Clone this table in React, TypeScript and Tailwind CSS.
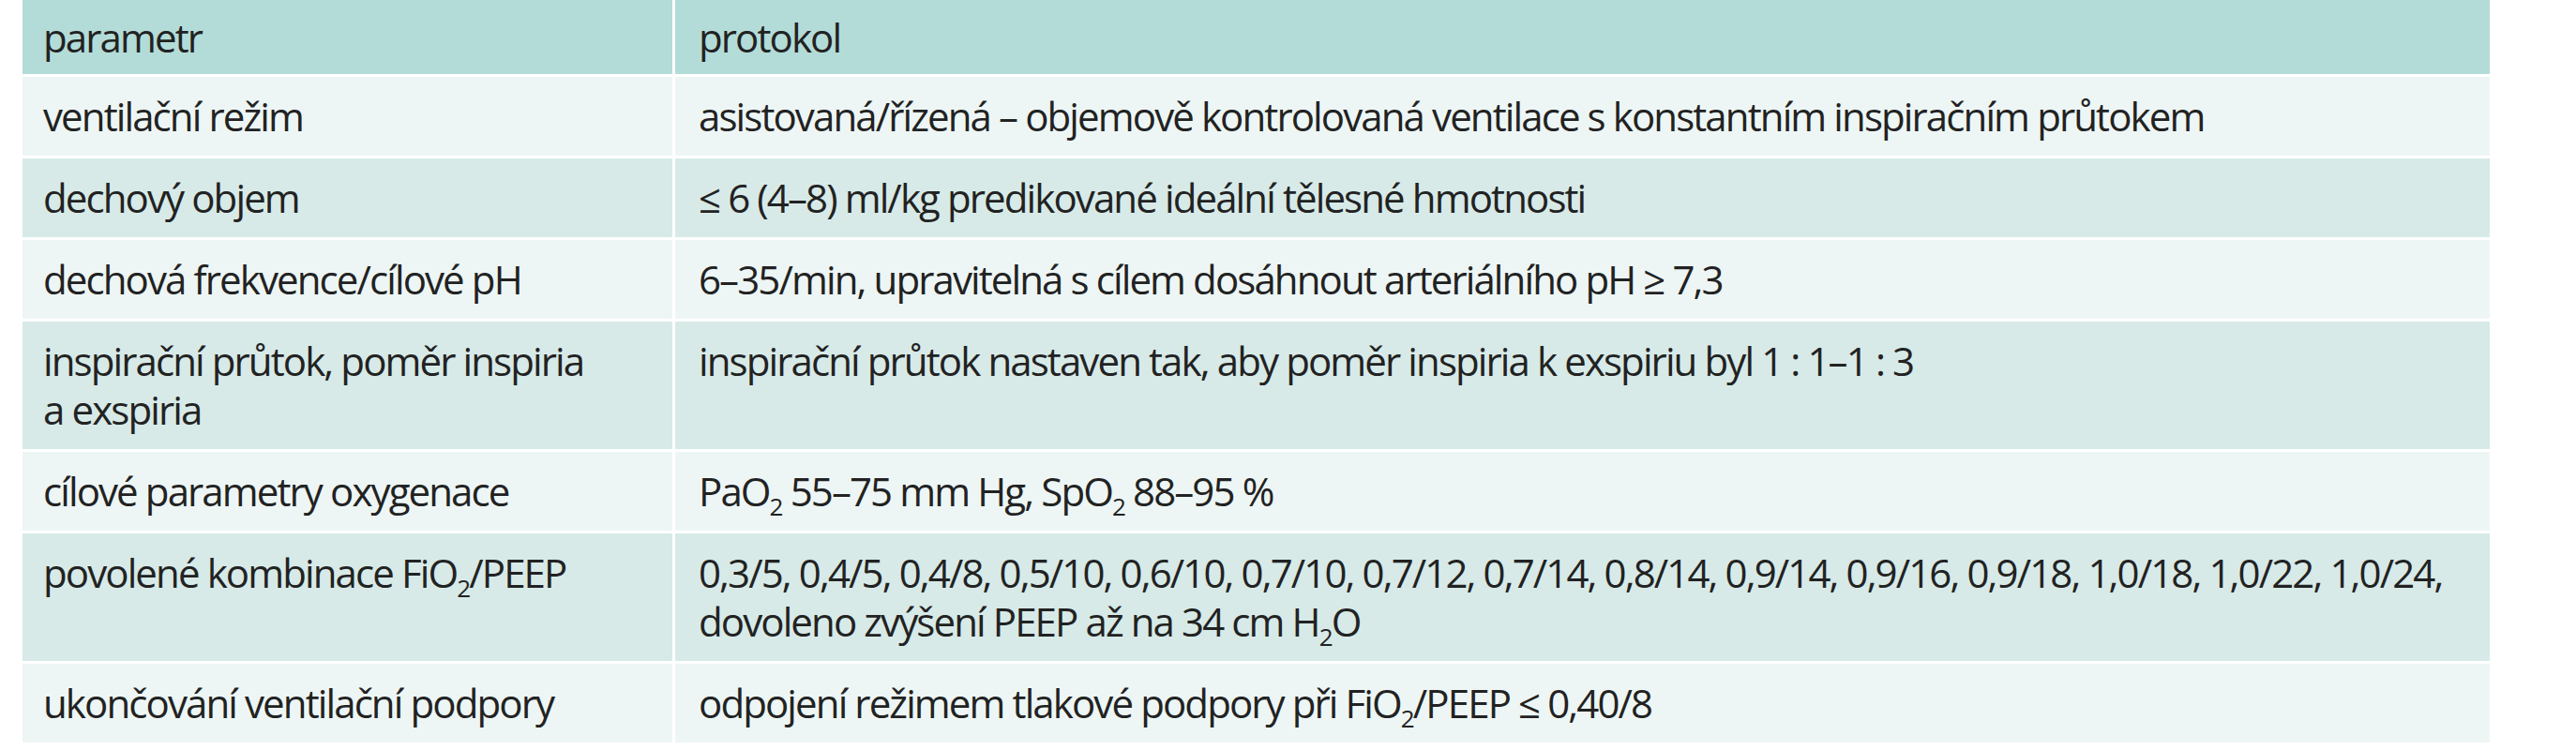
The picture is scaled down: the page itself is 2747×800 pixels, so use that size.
const Sub = ({ children }: { children: React.ReactNode }) => (
  <sub className="bottom-[-0.4em] text-[62%]">{children}</sub>
)

const rows: { param: React.ReactNode; protocol: React.ReactNode; tone: 'light' | 'dark' }[] = [
  {
    param: 'ventilační režim',
    protocol: 'asistovaná/řízená – objemově kontrolovaná ventilace s konstantním inspiračním průtokem',
    tone: 'light',
  },
  {
    param: 'dechový objem',
    protocol: '≤ 6 (4–8) ml/kg predikované ideální tělesné hmotnosti',
    tone: 'dark',
  },
  {
    param: 'dechová frekvence/cílové pH',
    protocol: '6–35/min, upravitelná s cílem dosáhnout arteriálního pH ≥ 7,3',
    tone: 'light',
  },
  {
    param: (
      <>
        inspirační průtok, poměr inspiria
        <br />a exspiria
      </>
    ),
    protocol: 'inspirační průtok nastaven tak, aby poměr inspiria k exspiriu byl 1 : 1–1 : 3',
    tone: 'dark',
  },
  {
    param: 'cílové parametry oxygenace',
    protocol: (
      <>
        PaO<Sub>2</Sub> 55–75 mm Hg, SpO<Sub>2</Sub> 88–95 %
      </>
    ),
    tone: 'light',
  },
  {
    param: (
      <>
        povolené kombinace FiO<Sub>2</Sub>/PEEP
      </>
    ),
    protocol: (
      <>
        0,3/5, 0,4/5, 0,4/8, 0,5/10, 0,6/10, 0,7/10, 0,7/12, 0,7/14, 0,8/14, 0,9/14, 0,9/16, 0,9/18, 1,0/18, 1,0/22, 1,0/24,
        <br />
        dovoleno zvýšení PEEP až na 34 cm H<Sub>2</Sub>O
      </>
    ),
    tone: 'dark',
  },
  {
    param: 'ukončování ventilační podpory',
    protocol: (
      <>
        odpojení režimem tlakové podpory při FiO<Sub>2</Sub>/PEEP ≤ 0,40/8
      </>
    ),
    tone: 'light',
  },
]

export default function App() {
  return (
    <div className="min-h-screen bg-white pl-[24px] font-['Open_Sans',sans-serif] text-[42px] leading-[52px] tracking-[-0.045em] text-[#222]">
      <div className="grid w-[2631px] grid-cols-[693px_1fr] gap-[3px] bg-white">
        <div className="bg-[#b3dcd8] pl-[22px] pt-[14px] pb-[13px]">parametr</div>
        <div className="bg-[#b3dcd8] pl-[25px] pt-[14px] pb-[13px]">protokol</div>
        {rows.map((r, i) => {
          const bg = r.tone === 'light' ? 'bg-[#edf6f5]' : 'bg-[#d7eae8]'
          return (
            <div key={i} className="contents">
              <div className={`${bg} pl-[22px] py-[16px]`}>{r.param}</div>
              <div className={`${bg} pl-[25px] py-[16px]`}>{r.protocol}</div>
            </div>
          )
        })}
      </div>
    </div>
  )
}
